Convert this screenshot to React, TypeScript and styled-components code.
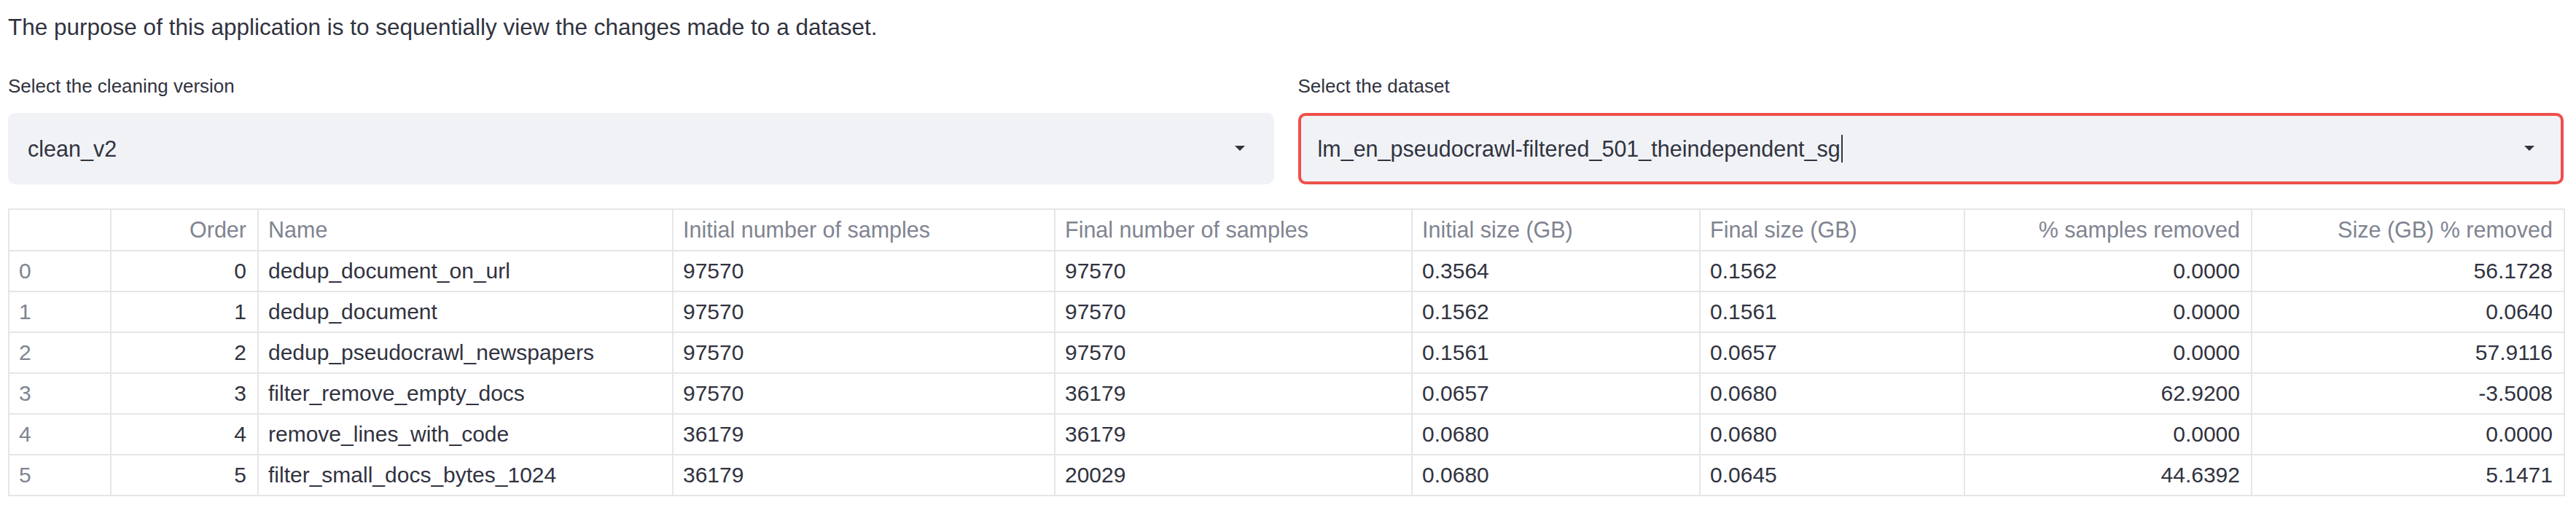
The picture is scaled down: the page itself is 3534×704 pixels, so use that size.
import React from "react";
import styled, { createGlobalStyle } from "styled-components";

const GlobalStyle = createGlobalStyle`
  html, body {
    margin: 0;
    padding: 0;
    background: #ffffff;
  }
  body {
    font-family: "Liberation Sans", Arial, sans-serif;
    color: #31333f;
  }
`;

const Page = styled.div`
  display: flex;
  flex-direction: column;
  padding: 8px 17px 0 11px;
  width: 3534px;
  box-sizing: border-box;
`;

const Intro = styled.p`
  margin: 0;
  font-size: 31.5px;
  line-height: 58px;
  color: #31333f;
`;

const SelectRow = styled.div`
  display: grid;
  grid-template-columns: 1fr 1fr;
  column-gap: 33px;
  margin-top: 30px;
`;

const Field = styled.div`
  display: flex;
  flex-direction: column;
  gap: 15px;
`;

const Label = styled.label`
  font-size: 26px;
  line-height: 44px;
  color: #31333f;
`;

const SelectBox = styled.div<{ $focused?: boolean }>`
  display: flex;
  align-items: center;
  justify-content: space-between;
  height: 98px;
  box-sizing: border-box;
  padding: 0 36px 0 23px;
  background: #f0f2f6;
  border: 4px solid ${(p) => (p.$focused ? "#ef4f4a" : "#f0f2f6")};
  border-radius: 10px;
`;

const Value = styled.span`
  display: flex;
  align-items: center;
  font-size: 30.5px;
  line-height: 44px;
  color: #31333f;
`;

const Caret = styled.span`
  display: inline-block;
  width: 2px;
  height: 38px;
  margin-left: 1px;
  background: #31333f;
`;

const Arrow = () => (
  <svg width="14" height="8" viewBox="0 0 14 8">
    <polygon points="0,0 14,0 7,7" fill="#31333f" />
  </svg>
);

const Grid = styled.div`
  display: grid;
  grid-template-columns: 140px 202px 569px 524px 490px 395px 363px 394px 429px;
  width: max-content;
  margin-top: 33px;
  border-top: 2px solid #e6e6ea;
  border-left: 2px solid #e6e6ea;
`;

const Cell = styled.div<{ $right?: boolean; $muted?: boolean; $head?: boolean }>`
  display: flex;
  align-items: center;
  justify-content: ${(p) => (p.$right ? "flex-end" : "flex-start")};
  height: ${(p) => (p.$head ? "57px" : "56px")};
  box-sizing: border-box;
  padding: 0 15px 0 13px;
  border-right: 2px solid #e6e6ea;
  border-bottom: 2px solid #e6e6ea;
  font-size: ${(p) => (p.$head ? "30.5px" : "30px")};
  white-space: nowrap;
  color: ${(p) => (p.$muted ? "#808491" : "#31333f")};
`;

const headers: { label: string; right?: boolean }[] = [
  { label: "" },
  { label: "Order", right: true },
  { label: "Name" },
  { label: "Initial number of samples" },
  { label: "Final number of samples" },
  { label: "Initial size (GB)" },
  { label: "Final size (GB)" },
  { label: "% samples removed", right: true },
  { label: "Size (GB) % removed", right: true },
];

const rows = [
  ["dedup_document_on_url", "97570", "97570", "0.3564", "0.1562", "0.0000", "56.1728"],
  ["dedup_document", "97570", "97570", "0.1562", "0.1561", "0.0000", "0.0640"],
  ["dedup_pseudocrawl_newspapers", "97570", "97570", "0.1561", "0.0657", "0.0000", "57.9116"],
  ["filter_remove_empty_docs", "97570", "36179", "0.0657", "0.0680", "62.9200", "-3.5008"],
  ["remove_lines_with_code", "36179", "36179", "0.0680", "0.0680", "0.0000", "0.0000"],
  ["filter_small_docs_bytes_1024", "36179", "20029", "0.0680", "0.0645", "44.6392", "5.1471"],
];

export default function App() {
  return (
    <>
      <GlobalStyle />
      <Page>
        <Intro>
          The purpose of this application is to sequentially view the changes made to a dataset.
        </Intro>
        <SelectRow>
          <Field>
            <Label>Select the cleaning version</Label>
            <SelectBox>
              <Value>clean_v2</Value>
              <Arrow />
            </SelectBox>
          </Field>
          <Field>
            <Label>Select the dataset</Label>
            <SelectBox $focused>
              <Value>
                lm_en_pseudocrawl-filtered_501_theindependent_sg
                <Caret />
              </Value>
              <Arrow />
            </SelectBox>
          </Field>
        </SelectRow>
        <Grid>
          {headers.map((h, i) => (
            <Cell key={"h" + i} $head $muted $right={h.right}>
              {h.label}
            </Cell>
          ))}
          {rows.map((r, i) => (
            <React.Fragment key={i}>
              <Cell $muted>{i}</Cell>
              <Cell $right>{i}</Cell>
              <Cell>{r[0]}</Cell>
              <Cell>{r[1]}</Cell>
              <Cell>{r[2]}</Cell>
              <Cell>{r[3]}</Cell>
              <Cell>{r[4]}</Cell>
              <Cell $right>{r[5]}</Cell>
              <Cell $right>{r[6]}</Cell>
            </React.Fragment>
          ))}
        </Grid>
      </Page>
    </>
  );
}
